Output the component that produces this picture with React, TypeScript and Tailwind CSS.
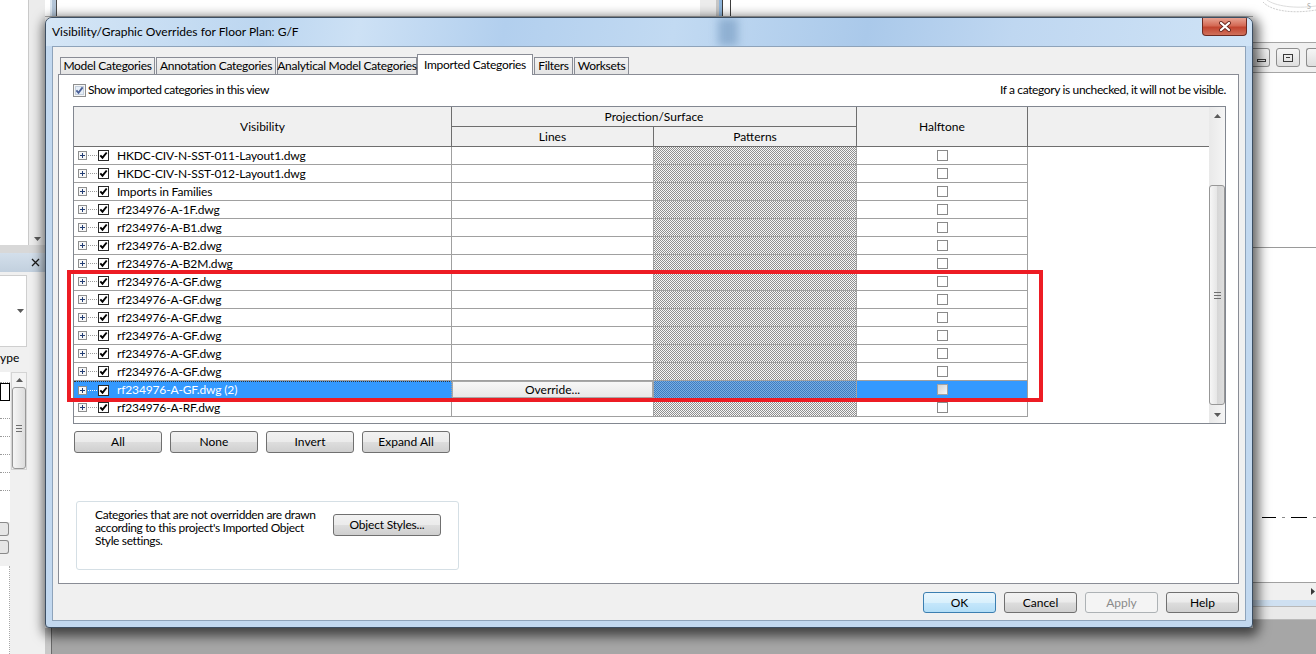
import type { ReactNode } from "react";

const ROWS = [
	"HKDC-CIV-N-SST-011-Layout1.dwg",
	"HKDC-CIV-N-SST-012-Layout1.dwg",
	"Imports in Families",
	"rf234976-A-1F.dwg",
	"rf234976-A-B1.dwg",
	"rf234976-A-B2.dwg",
	"rf234976-A-B2M.dwg",
	"rf234976-A-GF.dwg",
	"rf234976-A-GF.dwg",
	"rf234976-A-GF.dwg",
	"rf234976-A-GF.dwg",
	"rf234976-A-GF.dwg",
	"rf234976-A-GF.dwg",
	"rf234976-A-GF.dwg (2)",
	"rf234976-A-RF.dwg",
];
const SELECTED_ROW = 13;

const CHECKER =
	"bg-[image:repeating-conic-gradient(#8f8f8f_0_25%,#f7f7f7_0_50%)] bg-size-[2px_2px]";
const CHECKER_SELECTED =
	"bg-[image:repeating-conic-gradient(#3d7cc0_0_25%,#7aaee2_0_50%)] bg-size-[2px_2px]";

function TreeToggle({ selected }: { selected?: boolean }) {
	return (
		<svg width="19" height="9" viewBox="0 0 19 9" className="shrink-0">
			<rect x="0.5" y="0.5" width="8" height="8" fill="#f7f7f7" stroke="#8e8f8f" />
			<path d="M2 4.5h5M4.5 2v5" stroke="#233e75" />
			<path
				d="M10 4.5h9"
				stroke={selected ? "#ffffff" : "#9a9a9a"}
				strokeDasharray="1 1"
			/>
		</svg>
	);
}

function RowCheck() {
	return (
		<svg width="11" height="11" viewBox="0 0 11 11" className="shrink-0">
			<rect x="0.5" y="0.5" width="10" height="10" fill="#fff" stroke="#2a2a2a" />
			<path d="M2.3 5.3l2.2 2.4 4.2-5.2" fill="none" stroke="#000" strokeWidth="1.9" />
		</svg>
	);
}

function HalftoneBox({ selected }: { selected?: boolean }) {
	return selected ? (
		<div className="h-[11px] w-[11px] border border-[#a3a3a3] bg-[image:linear-gradient(135deg,#d2d2d2,#f7f7f7)]" />
	) : (
		<div className="h-[11px] w-[11px] border border-[#8a8a8a] bg-white" />
	);
}

function ShowCheck() {
	return (
		<svg width="13" height="13" viewBox="0 0 13 13" className="shrink-0">
			<rect x="0.5" y="0.5" width="12" height="12" fill="#f6f6f6" stroke="#8e8f8f" />
			<rect x="2.5" y="2.5" width="8" height="8" fill="#e6eef7" stroke="#c4cfdc" />
			<path d="M3.4 6.4l2.1 2.4 4.1-5.4" fill="none" stroke="#4a5f97" strokeWidth="1.8" />
		</svg>
	);
}

function Caret({ up }: { up?: boolean }) {
	return (
		<svg width="7" height="4" viewBox="0 0 7 4">
			<path d={up ? "M0 4L3.5 0L7 4Z" : "M0 0L7 0L3.5 4Z"} fill="#5a5a5a" />
		</svg>
	);
}

function WinButton({
	children,
	className = "",
	kind = "normal",
}: {
	children: ReactNode;
	className?: string;
	kind?: "normal" | "default" | "disabled";
}) {
	const look =
		kind === "default"
			? "border-[#3c7fb1] bg-[image:linear-gradient(#eaf6fd,#d9f0fc_50%,#c6e7fb_50%,#b3def7)]"
			: kind === "disabled"
				? "border-[#adb2b5] bg-[#f4f4f4] text-[#8a8a8a]"
				: "border-[#707070] bg-[image:linear-gradient(#f2f2f2,#ebebeb_48%,#dddddd_52%,#cfcfcf)]";
	return (
		<div
			className={`flex shrink-0 items-center justify-center whitespace-nowrap rounded-[3px] border ${look} ${className}`}
		>
			{children}
		</div>
	);
}

function Tab({ label, width, active, className = "" }: { label: string; width: string; active?: boolean; className?: string }) {
	if (active) {
		return (
			<div
				className={`relative z-10 -mb-px flex h-[21px] justify-center whitespace-nowrap border border-b-0 border-[#898c95] bg-white pt-[1px] ${width} ${className}`}
			>
				{label}
			</div>
		);
	}
	return (
		<div
			className={`flex h-[17px] items-center justify-center whitespace-nowrap border border-b-0 border-[#898c95] bg-[image:linear-gradient(#f3f3f3,#e4e4e4)] ${width} ${className}`}
		>
			{label}
		</div>
	);
}

function GridRow({ name, selected }: { name: string; selected: boolean }) {
	return (
		<div className="flex h-[18px] shrink-0">
			<div
				className={`flex w-[378px] items-center border-r border-b pl-[4px] ${
					selected
						? "border-[#a0a0a0] border-t border-t-[#333] border-dotted bg-[#3399ff] text-white"
						: "border-[#a0a0a0]"
				}`}
			>
				<TreeToggle selected={selected} />
				<div className="ml-[1px]">
					<RowCheck />
				</div>
				<span className="ml-[8px] whitespace-nowrap tracking-[-0.15px]">{name}</span>
			</div>
			<div className="flex w-[202px] border-r border-b border-[#a0a0a0]">
				{selected && (
					<div className="flex flex-1 items-center justify-center border border-[#a7a7a7] bg-[image:linear-gradient(#f7f7f7,#e8e8e8)]">
						Override...
					</div>
				)}
			</div>
			<div
				className={`w-[203px] border-r border-b border-[#a0a0a0] ${selected ? CHECKER_SELECTED : CHECKER}`}
			/>
			<div
				className={`flex w-[171px] items-center justify-center border-r border-b border-[#a0a0a0] ${
					selected ? "bg-[#3399ff]" : ""
				}`}
			>
				<HalftoneBox selected={selected} />
			</div>
			<div className="flex-1" />
		</div>
	);
}

function CategoryGrid() {
	return (
		<div className="mt-[9px] flex h-[318px] shrink-0 border border-[#828790] bg-white">
			<div className="flex flex-1 flex-col">
				{/* column headers */}
				<div className="flex h-[40px] shrink-0 border-b border-[#6e6e6e] bg-[#f0f0f0]">
					<div className="flex w-[378px] items-center justify-center border-r border-[#6e6e6e]">
						Visibility
					</div>
					<div className="flex w-[405px] flex-col border-r border-[#6e6e6e]">
						<div className="flex h-[20px] items-center justify-center border-b border-[#6e6e6e]">
							Projection/Surface
						</div>
						<div className="flex flex-1">
							<div className="flex w-[202px] items-center justify-center border-r border-[#6e6e6e]">
								Lines
							</div>
							<div className="flex flex-1 items-center justify-center">Patterns</div>
						</div>
					</div>
					<div className="flex w-[171px] items-center justify-center border-r border-[#6e6e6e]">
						Halftone
					</div>
					<div className="flex-1" />
				</div>
				{ROWS.map((name, i) => (
					<GridRow key={i} name={name} selected={i === SELECTED_ROW} />
				))}
			</div>
			{/* vertical scrollbar */}
			<div className="flex w-[16px] flex-col bg-[image:linear-gradient(90deg,#e9e9e9,#f5f5f5)]">
				<div className="flex h-[17px] items-center justify-center">
					<Caret up />
				</div>
				<div className="h-[61px]" />
				<div className="flex h-[220px] flex-col items-center justify-center gap-[2px] rounded-[3px] border border-[#979797] bg-[image:linear-gradient(90deg,#f6f6f6,#e6e6e6_50%,#d6d6d6_50%,#dedede)]">
					<div className="h-px w-[7px] bg-[#6f6f6f]" />
					<div className="h-px w-[7px] bg-[#6f6f6f]" />
					<div className="h-px w-[7px] bg-[#6f6f6f]" />
				</div>
				<div className="flex-1" />
				<div className="flex h-[17px] items-center justify-center">
					<Caret />
				</div>
			</div>
		</div>
	);
}

function CloseButton() {
	return (
		<div className="absolute right-[5px] top-0 flex h-[18px] w-[45px] items-center justify-center rounded-b-[4px] border border-t-0 border-[#6b2a22] bg-[image:linear-gradient(#e8a393,#d46a55_45%,#c24530_55%,#d0705a)]">
			<svg width="14" height="11" viewBox="0 0 14 11">
				<path d="M3 2l8 7M11 2l-8 7" stroke="#6b2a22" strokeWidth="4" strokeLinecap="round" />
				<path d="M3 2l8 7M11 2l-8 7" stroke="#ffffff" strokeWidth="2.2" strokeLinecap="round" />
			</svg>
		</div>
	);
}

function Dialog() {
	return (
		<div className="absolute left-[45px] top-[17px] flex h-[611px] w-[1208px] flex-col rounded-t-[7px] rounded-b-[4px] border border-[#3d4f63] bg-[#c2d8ef] shadow-[2px_4px_12px_4px_rgba(0,0,0,0.6)]">
			<div className="relative flex h-[28px] shrink-0 items-center overflow-hidden rounded-t-[6px] bg-[image:linear-gradient(100deg,#d5e6f6_0%,#bcd6f0_18%,#cde1f5_26%,#b2cfee_38%,#c2daf2_52%,#aac9ea_68%,#bfd7f1_80%,#cfe3f6_100%)] pl-[6px]">
				<div className="absolute left-[672px] top-0 h-full w-[20px] bg-[#8fb0d2] blur-[4px]" />
				<span className="relative tracking-normal">Visibility/Graphic Overrides for Floor Plan: G/F</span>
				<CloseButton />
			</div>
			<div className="mx-[6px] mb-[6px] flex flex-1 flex-col border border-[#8ea3ba] bg-[#f0f0f0]">
				<div className="mt-[7px] flex h-[20px] shrink-0 items-end pl-[7px] tracking-[-0.3px]">
					<Tab label="Model Categories" width="w-[95px]" />
					<Tab label="Annotation Categories" width="w-[120px]" className="ml-px" />
					<Tab label="Analytical Model Categories" width="w-[140px]" className="ml-px" />
					<Tab label="Imported Categories" width="w-[116px]" active />
					<Tab label="Filters" width="w-[39px]" className="ml-px" />
					<Tab label="Worksets" width="w-[55px]" className="ml-px" />
				</div>
				<div className="ml-[5px] mr-[6px] flex h-[510px] shrink-0 flex-col border border-[#898c95] bg-white pl-[14px] pr-[12px] pt-[8px]">
					<div className="flex h-[14px] shrink-0 items-center justify-between">
						<div className="flex items-center gap-[2px]">
							<ShowCheck />
							<span className="tracking-[-0.5px]">Show imported categories in this view</span>
						</div>
						<span className="tracking-[-0.37px]">
							If a category is unchecked, it will not be visible.
						</span>
					</div>
					<CategoryGrid />
					<div className="ml-px mt-[7px] flex gap-[8px]">
						<WinButton className="h-[22px] w-[88px]">All</WinButton>
						<WinButton className="h-[22px] w-[88px]">None</WinButton>
						<WinButton className="h-[22px] w-[88px]">Invert</WinButton>
						<WinButton className="h-[22px] w-[88px]">Expand All</WinButton>
					</div>
					<div className="ml-[3px] mt-[48px] flex h-[69px] w-[383px] items-start rounded-[3px] border border-[#d5dfe5] pl-[18px] pt-[6px]">
						<p className="w-[238px] leading-[13px] tracking-[-0.36px]">
							Categories that are not overridden are drawn
							<br />
							according to this project's Imported Object
							<br />
							Style settings.
						</p>
						<WinButton className="mt-[6px] h-[22px] w-[108px] tracking-[-0.2px]">
							Object Styles...
						</WinButton>
					</div>
				</div>
				<div className="mr-[6px] mt-[8px] flex justify-end gap-[8px]">
					<WinButton kind="default" className="h-[21px] w-[73px]">
						OK
					</WinButton>
					<WinButton className="h-[21px] w-[73px]">Cancel</WinButton>
					<WinButton kind="disabled" className="h-[21px] w-[73px]">
						Apply
					</WinButton>
					<WinButton className="h-[21px] w-[73px]">Help</WinButton>
				</div>
			</div>
		</div>
	);
}

function LeftPane() {
	return (
		<div className="flex w-[45px] shrink-0 flex-col bg-[#f0f0f0]">
			<div className="flex h-[245px] shrink-0">
				<div className="w-[29px] border-r border-[#c9c9c9] bg-white" />
				<div className="flex w-[16px] flex-col items-center justify-end bg-[#ececec] pb-[4px]">
					<Caret />
				</div>
			</div>
			<div className="h-[8px] shrink-0 bg-[#d8d8d8]" />
			<div className="flex h-[19px] shrink-0 items-center justify-end bg-[image:linear-gradient(#d3dfeb,#c2d0de)] pr-[5px]">
				<svg width="9" height="9" viewBox="0 0 9 9">
					<path d="M1 1l7 7M8 1l-7 7" stroke="#1a1a1a" strokeWidth="1.3" />
				</svg>
			</div>
			<div className="flex h-[78px] shrink-0 pt-[3px]">
				<div className="flex h-[72px] w-[27px] items-center justify-end border border-l-0 border-[#cfcfcf] bg-white pr-[2px]">
					<Caret />
				</div>
			</div>
			<div className="h-[22px] shrink-0 leading-[16px]">ype</div>
			<div className="flex h-[150px] shrink-0">
				<div className="flex w-[10px] flex-col bg-white">
					<div className="h-[11px] border-b border-dotted border-[#9a9a9a]" />
					<div className="h-[18px] border border-black" />
					<div className="h-[18px] border-b border-dotted border-[#9a9a9a]" />
					<div className="h-[18px] border-b border-dotted border-[#9a9a9a]" />
					<div className="h-[18px] border-b border-dotted border-[#9a9a9a]" />
					<div className="h-[18px] border-b border-dotted border-[#9a9a9a]" />
					<div className="h-[18px] border-b border-dotted border-[#9a9a9a]" />
				</div>
				<div className="ml-px flex h-[98px] w-[16px] flex-col items-center border border-[#d4d4d4] bg-[#f3f3f3]">
					<div className="flex h-[14px] items-center">
						<Caret up />
					</div>
					<div className="flex w-[14px] flex-1 flex-col items-center justify-center gap-[2px] rounded-[3px] border border-[#979797] bg-[image:linear-gradient(90deg,#f6f6f6,#dcdcdc)]">
						<div className="h-px w-[6px] bg-[#6f6f6f]" />
						<div className="h-px w-[6px] bg-[#6f6f6f]" />
						<div className="h-px w-[6px] bg-[#6f6f6f]" />
					</div>
				</div>
			</div>
			<div className="flex flex-1 flex-col gap-[4px]">
				<div className="h-[14px] w-[9px] rounded-r-[3px] border border-l-0 border-[#8a8a8a] bg-[#e6e6e6]" />
				<div className="h-[14px] w-[9px] rounded-r-[3px] border border-l-0 border-[#8a8a8a] bg-[#e6e6e6]" />
				<div className="mt-[8px] h-[110px] w-[10px] border-r border-dotted border-[#a8a8a8] bg-white" />
			</div>
		</div>
	);
}

function RightPane() {
	return (
		<div className="flex w-[63px] shrink-0 flex-col">
			<div className="h-[42px] shrink-0 bg-white">
				<svg width="63" height="20" viewBox="0 0 63 20">
					<path d="M10 2c8 9 30 12 53 8" fill="none" stroke="#cfcfcf" strokeDasharray="2 1" />
					<path d="M14 0c8 6 28 9 49 6" fill="none" stroke="#dddddd" />
					<text x="54" y="9" fontSize="7" fill="#a8a8a8" fontFamily="Lato, sans-serif">
						S
					</text>
				</svg>
			</div>
			<div className="flex h-[31px] shrink-0 items-center gap-[6px] border-y border-[#a5a5a5] bg-[#f0f0f0]">
				<div className="flex h-[19px] w-[17px] items-center justify-center rounded-r-[3px] border border-l-0 border-[#8d8d8d] bg-[image:linear-gradient(#f6f6f6,#dedede)]">
					<div className="mt-[5px] h-[3px] w-[9px] border border-[#3a3a3a]" />
				</div>
				<div className="flex h-[19px] w-[24px] items-center justify-center rounded-[3px] border border-[#8d8d8d] bg-[image:linear-gradient(#f6f6f6,#dedede)]">
					<div className="flex h-[8px] w-[10px] items-center justify-center border border-[#3a3a3a]">
						<div className="h-px w-[4px] bg-[#3a3a3a]" />
					</div>
				</div>
				<div className="h-[19px] flex-1 rounded-l-[3px] border border-r-0 border-[#8d8d8d] bg-[image:linear-gradient(#f6f6f6,#dedede)]" />
			</div>
			<div className="flex h-[509px] shrink-0 flex-col bg-white">
				<div className="h-[175px] border-b border-[#9a9a9a]" />
				<div className="h-[269px]" />
				<div className="flex h-[1px] gap-[6px] pl-[9px]">
					<div className="w-[16px] bg-black" />
					<div className="w-[4px] bg-[#8a8a8a]" />
					<div className="w-[18px] bg-black" />
					<div className="w-[4px] bg-[#8a8a8a]" />
				</div>
			</div>
			<div className="flex h-[18px] shrink-0 items-center justify-end border-t border-[#a0a0a0] bg-[#f0f0f0] pr-[1px]">
				<svg width="4" height="7" viewBox="0 0 4 7">
					<path d="M0 0L4 3.5L0 7Z" fill="#3a3a3a" />
				</svg>
			</div>
			<div className="h-[6px] shrink-0 bg-[#cfe0f1]" />
			<div className="h-[14px] shrink-0 border-y border-[#b9b9b9] bg-[#e9e9e9]" />
			<div className="flex-1 bg-[#a6a6a6]" />
		</div>
	);
}

function Backdrop() {
	return (
		<div className="flex h-full w-full">
			<LeftPane />
			<div className="flex flex-1 flex-col">
				<div className="relative flex h-[17px] shrink-0 border-b border-[#b0b0b0] bg-white">
					<div className="ml-[5px] w-[2px] bg-[#dbe6f0]" />
					<div className="w-[4px] bg-[#b3c5d8]" />
					<div className="w-px bg-[#4b4b4b]" />
					<div className="ml-[643px] w-[16px] bg-[#ececec]" />
					<div className="w-[3px] bg-[#c6c6c6]" />
					<div className="w-[3px] bg-[#8fb6dc]" />
					<div className="w-px bg-[#3d3d3d]" />
					<div className="w-[7px] bg-white" />
					<div className="w-px bg-[#3d3d3d]" />
				</div>
				<div className="flex-1 bg-white" />
				<div className="flex h-[26px] shrink-0 bg-[#a6a6a6]">
					<div className="w-[6px] bg-[#c9c9c9]" />
					<div className="w-px bg-[#6a6a6a]" />
				</div>
			</div>
			<RightPane />
		</div>
	);
}

export default function App() {
	return (
		<div className="relative h-[654px] w-[1316px] overflow-hidden bg-white font-['Lato',sans-serif] text-[12px] text-black">
			<Backdrop />
			<Dialog />
			{/* red annotation frame over the grid */}
			<div className="pointer-events-none absolute left-[67px] top-[270px] h-[132px] w-[976px] border-4 border-[#ed1c24]" />
		</div>
	);
}
